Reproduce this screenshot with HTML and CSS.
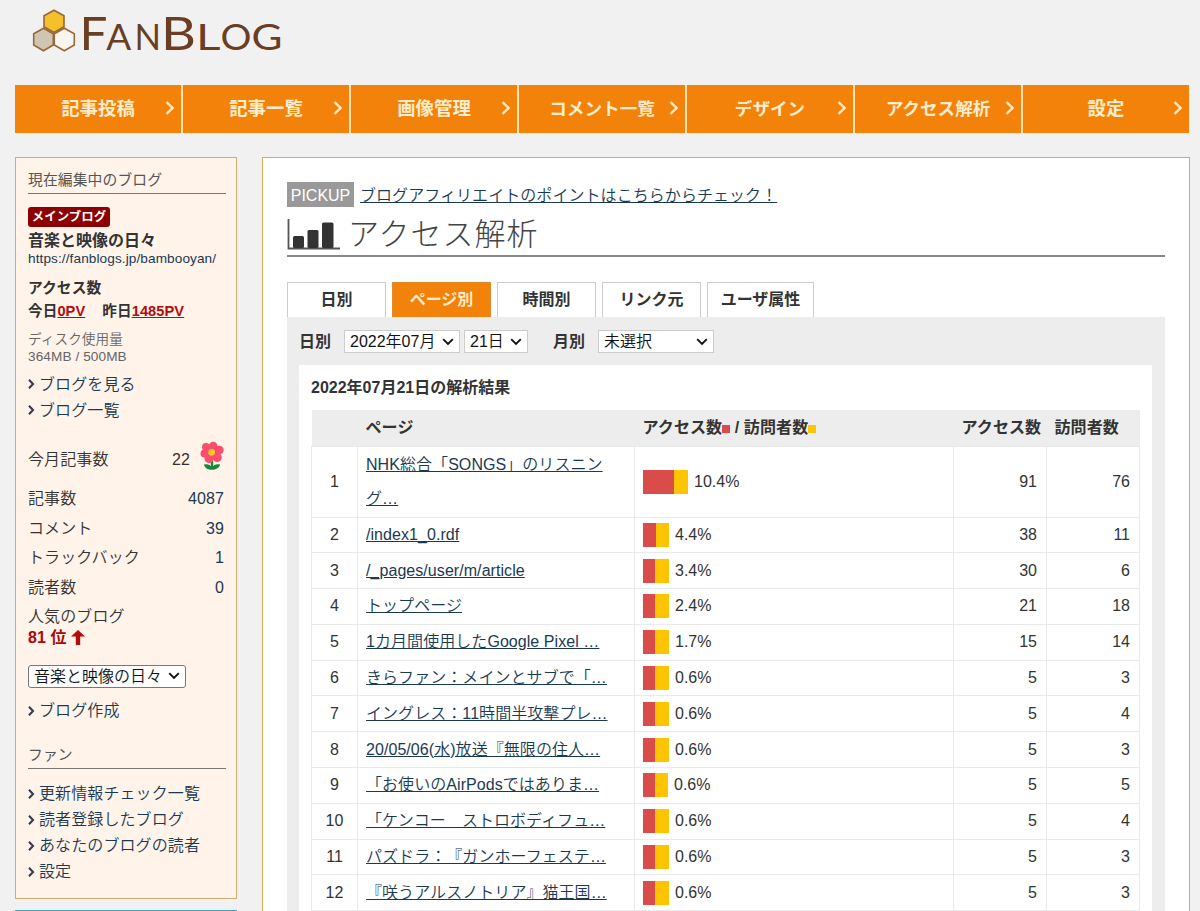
FILE: index.html
```html
<!DOCTYPE html>
<html lang="ja">
<head>
<meta charset="utf-8">
<title>FanBlog アクセス解析</title>
<link rel="stylesheet" href="styles.css">
</head>
<body>
<svg width="0" height="0" class="defs"><defs>
<symbol id="gt" viewBox="0 0 10 14"><path d="M1.5 1.2 7.6 7 1.5 12.8" fill="none" stroke="#ffe9bd" stroke-width="2.4"/></symbol>
<symbol id="arr" viewBox="0 0 7 10"><path d="M1 .8 5 5 1 9.2" fill="none" stroke="#3a3a52" stroke-width="2.1"/></symbol>
<symbol id="chev" viewBox="0 0 12 8"><path d="M1.2 1.2 6 6 10.8 1.2" fill="none" stroke="#111" stroke-width="1.9"/></symbol>
</defs></svg>
<header class="header">
  <svg class="logo" width="260" height="70" viewBox="0 0 260 70">
    <g stroke="#95693a" stroke-width="1.6">
      <path d="M13.5 28.2 23.3 33.8V45L13.5 50.8 3.7 45V33.8Z" fill="#d0c5b1"/>
      <path d="M34.3 28.2 44.3 33.8V45L34.3 50.8 24.3 45V33.8Z" fill="#f8f5ef"/>
      <path d="M24 10.2 34 15.8V26.8L24 32.5 14 26.8V15.8Z" fill="#f5c02b"/>
    </g>
    <g class="logo-text">
      <text x="49.6" y="49.500" font-size="47" textLength="28" lengthAdjust="spacingAndGlyphs">F</text>
      <text x="76.3" y="49.500" font-size="37.500" textLength="25" lengthAdjust="spacingAndGlyphs">A</text>
      <text x="104.500" y="49.500" font-size="37.500" textLength="26.500" lengthAdjust="spacingAndGlyphs">N</text>
      <text x="131" y="49.500" font-size="47" textLength="35" lengthAdjust="spacingAndGlyphs">B</text>
      <text x="166" y="49.500" font-size="37.500" textLength="24.500" lengthAdjust="spacingAndGlyphs">L</text>
      <text x="190.500" y="49.500" font-size="37.500" textLength="31" lengthAdjust="spacingAndGlyphs">O</text>
      <text x="221.500" y="49.500" font-size="37.500" textLength="31" lengthAdjust="spacingAndGlyphs">G</text>
    </g>
  </svg>
</header>
<nav class="nav">
  <a>記事投稿<svg><use href="#gt"/></svg></a>
  <a>記事一覧<svg><use href="#gt"/></svg></a>
  <a>画像管理<svg><use href="#gt"/></svg></a>
  <a class="kana">コメント一覧<svg><use href="#gt"/></svg></a>
  <a class="kana">デザイン<svg><use href="#gt"/></svg></a>
  <a class="kana">アクセス解析<svg><use href="#gt"/></svg></a>
  <a>設定<svg><use href="#gt"/></svg></a>
</nav>
<div class="columns">
  <div class="side-col">
    <aside class="side">
      <h2 class="side-h">現在編集中のブログ</h2>
      <div class="badge">メインブログ</div>
      <div class="blog-name">音楽と映像の日々</div>
      <div class="blog-url">https://fanblogs.jp/bambooyan/</div>
      <div class="acc">アクセス数</div>
      <div class="pv">今日<u>0PV</u><span>昨日<u>1485PV</u></span></div>
      <div class="disk">ディスク使用量</div>
      <div class="disk usage">364MB / 500MB</div>
      <ul class="links l1">
        <li><svg><use href="#arr"/></svg>ブログを見る</li>
        <li><svg><use href="#arr"/></svg>ブログ一覧</li>
      </ul>
      <div class="month"><span>今月記事数</span><span class="num">22</span>
        <svg width="24" height="30" viewBox="0 0 24 30">
          <path d="M12 19v8" stroke="#168a3c" stroke-width="2.4"/>
          <path d="M4 23.5c3-1 6.500 0 8 3 1.500-3 5-4 8.200-3-1.200 3.700-4.500 5.300-8.200 5.300S5 27.500 4 23.500Z" fill="#168a3c"/>
          <g fill="#fb4d6e"><circle cx="13.200" cy="5" r="4.300"/><circle cx="19.500" cy="9" r="4.200"/><circle cx="17.200" cy="16.500" r="4.500"/><circle cx="9" cy="17.500" r="4.500"/><circle cx="4.500" cy="12.500" r="4"/><circle cx="6" cy="6" r="4"/><circle cx="12" cy="11" r="6"/></g>
          <circle cx="11.600" cy="11.300" r="3.400" fill="#ffc72c"/>
        </svg>
      </div>
      <dl class="stats">
        <div><dt>記事数</dt><dd>4087</dd></div>
        <div><dt>コメント</dt><dd>39</dd></div>
        <div><dt>トラックバック</dt><dd>1</dd></div>
        <div><dt>読者数</dt><dd>0</dd></div>
      </dl>
      <div class="pop">人気のブログ</div>
      <div class="rank">81 位 <svg width="14" height="15" viewBox="0 0 14 15"><path d="M7 0 14 6.500H9.200V15H4.800V6.500H0Z" fill="#b70a0a"/></svg></div>
      <div class="select blog-select">音楽と映像の日々<svg><use href="#chev"/></svg></div>
      <ul class="links l2"><li><svg><use href="#arr"/></svg>ブログ作成</li></ul>
      <h2 class="side-h fan">ファン</h2>
      <ul class="links l3">
        <li><svg><use href="#arr"/></svg>更新情報チェック一覧</li>
        <li><svg><use href="#arr"/></svg>読者登録したブログ</li>
        <li><svg><use href="#arr"/></svg>あなたのブログの読者</li>
        <li><svg><use href="#arr"/></svg>設定</li>
      </ul>
    </aside>
    <div class="banner"></div>
  </div>
  <main class="main">
    <div class="pickup"><span>PICKUP</span><a>ブログアフィリエイトのポイントはこちらからチェック！</a></div>
    <h1 class="title">
      <svg width="54" height="32" viewBox="0 0 54 32"><path d="M1.500 0V29.500H53" fill="none" stroke="#555" stroke-width="1.800"/><g fill="#333"><rect x="6" y="17" width="11" height="12" rx="1.500"/><rect x="20.500" y="11" width="11" height="18" rx="1.500"/><rect x="35" y="3.500" width="11.500" height="25.500" rx="1.500"/></g></svg>
      <span>アクセス解析</span>
    </h1>
    <div class="tabs"><a>日別</a><a class="on">ページ別</a><a>時間別</a><a>リンク元</a><a class="wide">ユーザ属性</a></div>
    <div class="panel">
      <div class="filters">
        <b>日別</b><div class="select s1">2022年07月<svg><use href="#chev"/></svg></div><div class="select s2">21日<svg><use href="#chev"/></svg></div>
        <b class="monthly">月別</b><div class="select s3">未選択<svg><use href="#chev"/></svg></div>
      </div>
      <section class="result">
        <h3>2022年07月21日の解析結果</h3>
        <table>
          <colgroup><col class="c1"><col class="c2"><col class="c3"><col class="c4"><col class="c5"></colgroup>
          <thead><tr><th></th><th>ページ</th><th>アクセス数<i class="key red"></i> / 訪問者数<i class="key yel"></i></th><th>アクセス数</th><th>訪問者数</th></tr></thead>
          <tbody>
            <tr class="tall"><td>1</td><td><a>NHK総合「SONGS」のリスニン<br>グ…</a></td><td><div class="bar"><i class="red" style="width:31px"></i><i class="yel" style="width:14px"></i>10.4%</div></td><td>91</td><td>76</td></tr>
            <tr><td>2</td><td><a>/index1_0.rdf</a></td><td><div class="bar"><i class="red" style="width:13px"></i><i class="yel" style="width:13px"></i>4.4%</div></td><td>38</td><td>11</td></tr>
            <tr><td>3</td><td><a>/_pages/user/m/article</a></td><td><div class="bar"><i class="red" style="width:12px"></i><i class="yel" style="width:14px"></i>3.4%</div></td><td>30</td><td>6</td></tr>
            <tr><td>4</td><td><a>トップページ</a></td><td><div class="bar"><i class="red" style="width:12px"></i><i class="yel" style="width:14px"></i>2.4%</div></td><td>21</td><td>18</td></tr>
            <tr><td>5</td><td><a>1カ月間使用したGoogle Pixel …</a></td><td><div class="bar"><i class="red" style="width:12px"></i><i class="yel" style="width:14px"></i>1.7%</div></td><td>15</td><td>14</td></tr>
            <tr><td>6</td><td><a>きらファン：メインとサブで「…</a></td><td><div class="bar"><i class="red" style="width:12px"></i><i class="yel" style="width:14px"></i>0.6%</div></td><td>5</td><td>3</td></tr>
            <tr><td>7</td><td><a>イングレス：11時間半攻撃プレ…</a></td><td><div class="bar"><i class="red" style="width:12px"></i><i class="yel" style="width:14px"></i>0.6%</div></td><td>5</td><td>4</td></tr>
            <tr><td>8</td><td><a>20/05/06(水)放送『無限の住人…</a></td><td><div class="bar"><i class="red" style="width:12px"></i><i class="yel" style="width:14px"></i>0.6%</div></td><td>5</td><td>3</td></tr>
            <tr><td>9</td><td><a>「お使いのAirPodsではありま…</a></td><td><div class="bar"><i class="red" style="width:12px"></i><i class="yel" style="width:13px"></i>0.6%</div></td><td>5</td><td>5</td></tr>
            <tr><td>10</td><td><a>「ケンコー　ストロボディフュ…</a></td><td><div class="bar"><i class="red" style="width:12px"></i><i class="yel" style="width:14px"></i>0.6%</div></td><td>5</td><td>4</td></tr>
            <tr><td>11</td><td><a>パズドラ：『ガンホーフェステ…</a></td><td><div class="bar"><i class="red" style="width:12px"></i><i class="yel" style="width:14px"></i>0.6%</div></td><td>5</td><td>3</td></tr>
            <tr><td>12</td><td><a>『咲うアルスノトリア』猫王国…</a></td><td><div class="bar"><i class="red" style="width:12px"></i><i class="yel" style="width:14px"></i>0.6%</div></td><td>5</td><td>3</td></tr>
          </tbody>
        </table>
      </section>
    </div>
  </main>
</div>
</body>
</html>
```
FILE: styles.css
```css
* { box-sizing: border-box; }
html { overflow: hidden; }
body {
  margin: 0; height: 911px; overflow: hidden; background: #f1f1f1; color: #333;
  font: 350 16px/20px "Liberation Sans", "Noto Sans CJK JP", sans-serif;
  text-spacing-trim: space-all; white-space: nowrap;
}
h1, h2, h3, ul, dl, dd { margin: 0; padding: 0; font-weight: 350; }
ul { list-style: none; }
b, th { font-weight: 700; }
.defs { display: block; height: 0; }
.header { height: 85px; padding-left: 30px; }
.logo { display: block; }
.logo-text { font-family: Lato, sans-serif; font-weight: 400; fill: #6a3e22; }

.nav { display: flex; gap: 2px; width: 1174px; height: 48px; margin-left: 15px; background: #ffe3ae; }
.nav a {
  flex: 0 0 166px; display: grid; grid-template-columns: 15px 1fr 15px; align-items: center;
  padding: 0 4px; text-align: center;
  background: #f3820a; color: #ffecca; font-weight: 700; font-size: 18.4px; line-height: 46px;
}
.nav a::before { content: ""; }
.nav svg { width: 10px; height: 14px; margin: -2px 0 0 3px; }
.nav .kana { font-size: 17.6px; }

.columns { display: flex; gap: 25px; padding: 24px 0 0 15px; align-items: flex-start; }
.side-col { width: 222px; flex: none; }
.side { height: 742px; padding: 8px 10px 0 12px; border: 1px solid #ceaf70; background: #fff3ea; letter-spacing: .1px; }
.side-h { height: 28px; line-height: 28px; font-size: 14.8px; font-weight: 400; color: #555; border-bottom: 1.5px solid #777; }
.badge { width: 82px; height: 20px; margin-top: 13px; border-radius: 3px; background: #8c0000; color: #fff; font-weight: 700; font-size: 12.4px; line-height: 20px; text-align: center; }
.blog-name { font-weight: 700; line-height: 28px; height: 24px; letter-spacing: 0; }
.blog-url { font-size: 13.6px; line-height: 15px; color: #1a3a52; }
.acc { margin-top: 12px; font-weight: 700; font-size: 14.7px; }
.pv { height: 25px; line-height: 26px; font-weight: 700; font-size: 14.6px; }
.pv u { color: #b00d0d; }
.pv span { margin-left: 17px; }
.disk { height: 16px; margin-top: 8px; line-height: 18px; font-size: 13.6px; color: #666; }
.disk.usage { height: 18px; margin: 0; line-height: 19px; }
.links li { display: flex; align-items: center; height: 26px; line-height: 27px; color: #1a3a52; }
.links svg { width: 7px; height: 10px; margin-right: 4px; }
.l1 { margin-top: 6px; }
.month { display: flex; align-items: center; height: 48px; margin-top: 13px; }
.month .num { margin-left: auto; margin-right: 10px; }
.month svg { margin-top: -8px; margin-right: 2px; }
.stats div { display: flex; justify-content: space-between; height: 29.6px; line-height: 29px; padding-right: 2px; }
.stats dd { color: #1a3a52; }
.pop { margin-top: 4.5px; }
.rank { color: #a80808; font-weight: 700; line-height: 21px; height: 20px; }
.rank svg { vertical-align: -2px; }
.select {
  display: flex; align-items: center; justify-content: space-between; height: 23px; padding: 0 5px;
  border: 1px solid #ccc; background: #fff; color: #111; line-height: 21px; letter-spacing: 0;
}
.select svg { width: 12px; height: 8px; }
.blog-select { width: 158px; margin-top: 18px; border-color: #777; border-radius: 3px; }
.l2 { margin-top: 10px; }
.fan { margin-top: 17px; }
.l3 { margin-top: 12px; }
.banner { height: 20px; margin-top: 11px; background: #3ba1cd; }

.main { width: 928px; height: 754px; flex: none; padding: 24px 24px 0; border: 1px solid #d6a95c; border-bottom: 0; background: #fff; overflow: hidden; }
.pickup { display: flex; height: 25px; line-height: 27px; }
.pickup span { width: 67px; margin-right: 6px; background: #999; color: #fff; text-align: center; }
.pickup a, td a { color: #1a3a52; text-decoration: underline; letter-spacing: .06px; }
.title { display: flex; height: 50px; padding-top: 12px; border-bottom: 2px solid #888; }
.title span { margin: -1px 0 0 7px; font-size: 31px; font-weight: 300; letter-spacing: 1px; line-height: 34px; color: #444; }
.tabs { display: flex; gap: 6px; margin-top: 25px; }
.tabs a { width: 99px; height: 35px; line-height: 33px; border: 1px solid #ccc; border-bottom: 0; text-align: center; font-weight: 700; }
.tabs .on { background: #f3820a; border-color: #e08a2a; color: #ffecca; }
.tabs .wide { width: 107px; }
.panel { padding: 13px 13px 0 12px; background: #ededed; }
.filters { display: flex; height: 35px; line-height: 23px; }
.filters b { width: 45px; }
.filters .monthly { margin-left: 25px; }
.s1 { width: 116px; }
.s2 { width: 64px; margin-left: 4px; }
.s3 { width: 116px; }
.result { height: 560px; padding: 12px; background: #fff; }
.result h3 { height: 33px; font-size: 16px; line-height: 21px; font-weight: 700; }
table { width: 828px; border-collapse: collapse; table-layout: fixed; }
.c1 { width: 46px; } .c2 { width: 277px; } .c3 { width: 319px; } .c4, .c5 { width: 93px; }
th { height: 36px; padding: 0 8px; background: #ededed; text-align: left; letter-spacing: .1px; }
td { height: 35.8px; padding: 0 8px; border: 1px solid #eaeaea; }
.tall td { height: 71px; line-height: 34px; }
td:first-child { text-align: center; }
td:nth-child(n+4) { text-align: right; padding-right: 9px; }
.key { display: inline-block; width: 8px; height: 8px; }
.bar { display: flex; height: 24px; line-height: 24px; }
.bar .yel { margin-right: 6px; }
.red { background: #d94c4a; }
.yel { background: #ffc400; }
```
